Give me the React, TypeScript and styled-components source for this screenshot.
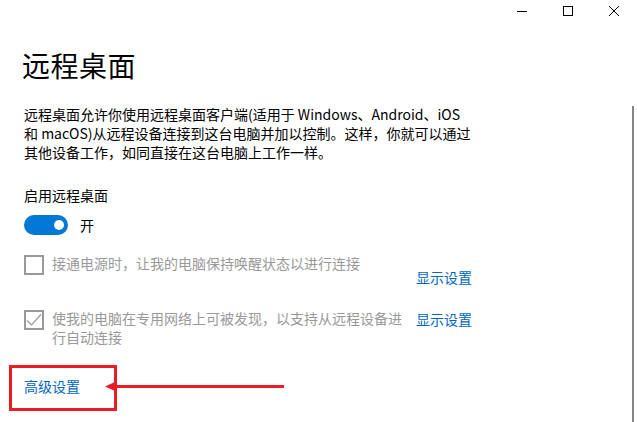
import React from "react";
import styled, { createGlobalStyle } from "styled-components";

const Global = createGlobalStyle`
  html, body { margin: 0; padding: 0; background: #fff; }
  body { font-family: "Noto Sans CJK SC", "Noto Sans", sans-serif; color: #000; }
  * { box-sizing: border-box; }
`;

const Window = styled.div`
  position: relative;
  width: 637px;
  height: 422px;
  overflow: hidden;
  background: #fff;
`;

const TitleBar = styled.div`
  display: flex;
  justify-content: flex-end;
  height: 32px;
`;

const CaptionButton = styled.div`
  width: 46px;
  height: 22px;
  display: flex;
  align-items: center;
  justify-content: center;
`;

const Content = styled.div`
  padding: 15px 0 0 24px;
`;

const Heading = styled.h1`
  margin: 0 0 0 -2px;
  font-size: 28px;
  line-height: 36px;
  font-weight: 400;
  letter-spacing: 0.5px;
`;

const Paragraph = styled.p`
  margin: 22px 0 0 0;
  font-size: 14px;
  line-height: 19px;
  white-space: nowrap;
`;

const Label = styled.div`
  margin-top: 24px;
  font-size: 14px;
  line-height: 19px;
`;

const ToggleRow = styled.div`
  margin-top: 10px;
  display: flex;
  align-items: center;
  gap: 12px;
  height: 20px;
  font-size: 14px;
`;

const Toggle = styled.div`
  width: 44px;
  height: 20px;
  border-radius: 10px;
  background: #0078d7;
  display: flex;
  align-items: center;
  justify-content: flex-end;
  padding-right: 4px;
`;

const Knob = styled.div`
  width: 10px;
  height: 10px;
  border-radius: 50%;
  background: #fff;
`;

const OptionRow = styled.div<{ $top: number }>`
  margin-top: ${(p) => p.$top}px;
  display: grid;
  grid-template-columns: 392px auto;
  align-items: start;
`;

const CheckLabel = styled.div`
  display: flex;
  align-items: flex-start;
  gap: 8px;
`;

const Box = styled.div`
  flex: none;
  width: 20px;
  height: 20px;
  border: 2px solid #999;
  display: flex;
  align-items: center;
  justify-content: center;
`;

const CheckText = styled.div`
  color: #999;
  font-size: 14px;
  line-height: 19px;
  margin-top: -1px;
  white-space: nowrap;
`;

const Link = styled.a<{ $offset?: number }>`
  color: #0067c0;
  font-size: 14px;
  line-height: 19px;
  text-decoration: none;
  margin-top: ${(p) => p.$offset ?? 0}px;
  white-space: nowrap;
`;

const AdvancedLink = styled(Link)`
  display: block;
  margin-top: 30px;
`;

const Scrollbar = styled.div`
  position: absolute;
  right: 3px;
  top: 106px;
  bottom: 0;
  width: 2px;
  background: #858585;
`;

const Highlight = styled.div`
  position: absolute;
  left: 9px;
  top: 365px;
  width: 108px;
  height: 46px;
  border: 3px solid #ec1c24;
`;

const Arrow = styled.svg`
  position: absolute;
  left: 104px;
  top: 380px;
`;

export default function App() {
  return (
    <Window>
      <Global />
      <TitleBar>
        <CaptionButton>
          <svg width="10" height="10" viewBox="0 0 10 10">
            <path d="M0 5.5H10" stroke="#000" strokeWidth="1" />
          </svg>
        </CaptionButton>
        <CaptionButton>
          <svg width="10" height="10" viewBox="0 0 10 10">
            <rect x="0.5" y="0.5" width="9" height="9" fill="none" stroke="#000" strokeWidth="1" />
          </svg>
        </CaptionButton>
        <CaptionButton>
          <svg width="10" height="10" viewBox="0 0 10 10">
            <path d="M0 0L10 10M10 0L0 10" stroke="#000" strokeWidth="1" />
          </svg>
        </CaptionButton>
      </TitleBar>
      <Content>
        <Heading>远程桌面</Heading>
        <Paragraph>
          远程桌面允许你使用远程桌面客户端(适用于 Windows、Android、iOS
          <br />
          和 macOS)从远程设备连接到这台电脑并加以控制。这样，你就可以通过
          <br />
          其他设备工作，如同直接在这台电脑上工作一样。
        </Paragraph>
        <Label>启用远程桌面</Label>
        <ToggleRow>
          <Toggle>
            <Knob />
          </Toggle>
          <span>开</span>
        </ToggleRow>
        <OptionRow $top={20}>
          <CheckLabel>
            <Box />
            <CheckText>接通电源时，让我的电脑保持唤醒状态以进行连接</CheckText>
          </CheckLabel>
          <Link href="#" $offset={13}>显示设置</Link>
        </OptionRow>
        <OptionRow $top={23}>
          <CheckLabel>
            <Box>
              <svg width="16" height="16" viewBox="0 0 16 16">
                <path d="M1 8.5L5.5 13L15 2.5" fill="none" stroke="#999" strokeWidth="1.2" />
              </svg>
            </Box>
            <CheckText>
              使我的电脑在专用网络上可被发现，以支持从远程设备进
              <br />
              行自动连接
            </CheckText>
          </CheckLabel>
          <Link href="#">显示设置</Link>
        </OptionRow>
        <AdvancedLink href="#">高级设置</AdvancedLink>
      </Content>
      <Scrollbar />
      <Highlight />
      <Arrow width="182" height="14" viewBox="0 0 182 14">
        <path d="M8 6.5H180" stroke="#ec1c24" strokeWidth="3" />
        <path d="M1 6.5L12 1.5V11.5Z" fill="#ec1c24" />
      </Arrow>
    </Window>
  );
}
